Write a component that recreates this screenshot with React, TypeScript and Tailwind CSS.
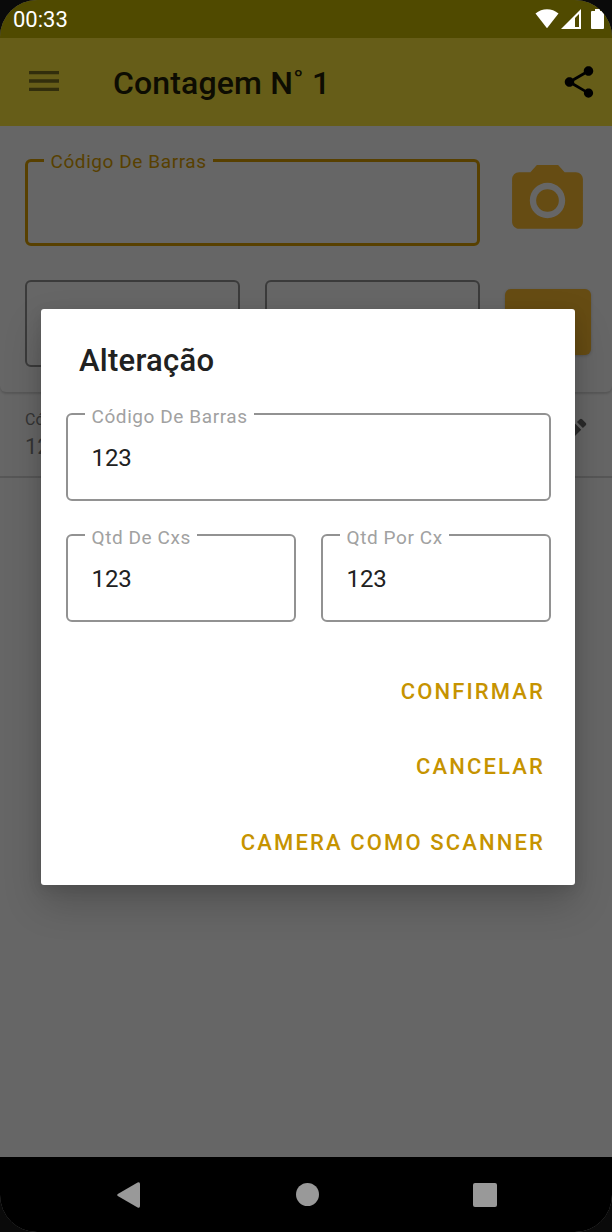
import type { ReactNode } from "react";
import { MdCameraAlt, MdEdit, MdMenu, MdShare } from "react-icons/md";

function OutlinedField({
  label,
  value,
  className = "",
}: {
  label: string;
  value: string;
  className?: string;
}) {
  return (
    <fieldset
      className={`h-[99px] min-w-0 rounded-[6px] border-2 border-[#929292] pl-[17px] ${className}`}
    >
      <legend className="h-6 pr-[6px] pl-[6.5px] text-[19px] leading-[29px] tracking-[0.58px] whitespace-nowrap text-[#a1a1a1]">
        {label}
      </legend>
      <div className="pt-[18px] pl-[6.5px] text-[24px] leading-7 tracking-[-0.1px] text-[#212121]">
        {value}
      </div>
    </fieldset>
  );
}

function DialogAction({ children }: { children: ReactNode }) {
  return (
    <button className="h-[75.5px] text-right text-[22px] leading-none font-medium tracking-[2.13px] whitespace-nowrap text-[#c69300]">
      {children}
    </button>
  );
}

function StatusBar() {
  return (
    <div className="flex h-[38px] shrink-0 items-start bg-[#504a00] pt-[9px] pr-2 pl-[13px] text-white">
      <span className="flex-1 text-[22px] leading-[22px]">00:33</span>
      <svg className="mr-[2px] h-[20px] w-[24px]" viewBox="0 0 24 20" fill="currentColor">
        <path d="M12 19.2 0.5 4.6C7-1.1 17-1.1 23.5 4.6Z" />
      </svg>
      <svg className="mr-[10px] h-[20px] w-[20px]" viewBox="0 0 20 20" fill="currentColor">
        <path fillRule="evenodd" d="M0 20 20 0V20ZM14 9V18H18V5Z" />
      </svg>
      <svg className="h-[20px] w-[13px]" viewBox="0 0 13 20" fill="currentColor">
        <path d="M4 0H9V2H12Q13 2 13 3V19Q13 20 12 20H1Q0 20 0 19V3Q0 2 1 2H4Z" />
      </svg>
    </div>
  );
}

function AppBar() {
  return (
    <header className="flex h-[88px] shrink-0 items-center bg-[#665d18] pr-[14.5px] pl-6 text-[#0d0c02]">
      <MdMenu className="relative -top-px h-10 w-10 text-[#322e0c]" />
      <h1 className="ml-[49px] flex-1 pt-[2px] text-[32px] leading-none font-medium tracking-[0.15px]">
        Contagem N˚ 1
      </h1>
      <MdShare className="relative -top-[0.5px] h-[38px] w-[38px] text-black" />
    </header>
  );
}

function CountForm() {
  return (
    <section className="h-[266px] shrink-0 rounded-b-[6px] bg-[#666666] pt-[22px] pl-[25px] shadow-[0_2px_2px_rgba(0,0,0,0.14)]">
      <div className="flex">
        <fieldset className="h-[98px] w-[455px] rounded-[6px] border-[3px] border-[#584000] pl-[16px]">
          <legend className="h-6 pr-[6px] pl-[6.5px] text-[19px] leading-[28px] tracking-[0.58px] whitespace-nowrap text-[#584000]">
            Código De Barras
          </legend>
        </fieldset>
        <MdCameraAlt className="mt-[10px] ml-[25px] h-[85px] w-[85px] text-[#664c13]" />
      </div>
      <div className="mt-[34px] flex">
        <div className="h-[87px] w-[215px] rounded-[6px] border-2 border-[#3b3b3b]" />
        <div className="ml-[25px] h-[87px] w-[215px] rounded-[6px] border-2 border-[#3b3b3b]" />
        <div className="mt-[9px] ml-[25px] h-[66px] w-[86px] rounded-[6px] bg-[#664c13] shadow-[0_1px_3px_rgba(0,0,0,0.2)]" />
      </div>
    </section>
  );
}

function CountRow() {
  return (
    <div className="mt-[2px] flex h-[84px] shrink-0 justify-between border-b-2 border-[#575757] pr-[21px] pl-[25px] text-[#343434]">
      <div className="pt-[16px]">
        <div className="text-[16px] leading-[20px]">Código De Barras</div>
        <div className="pt-[3px] text-[22px] leading-[28px]">123</div>
      </div>
      <MdEdit className="mt-5 h-[38px] w-[38px] text-[#2b2b2b]" />
    </div>
  );
}

function NavigationBar() {
  return (
    <nav className="flex h-[75px] shrink-0 items-center bg-black pl-[117px] text-[#999999]">
      <svg className="h-[26px] w-[23px]" viewBox="0 0 23 26" fill="currentColor">
        <path d="M.8 12 20.6.6Q23-.4 23 2V24Q23 26.4 20.6 25.4L.8 14Q-.4 13 .8 12Z" />
      </svg>
      <div className="mb-px ml-[156px] h-[23px] w-[23px] rounded-full bg-[#999999]" />
      <div className="ml-[154px] h-[24px] w-[24px] rounded-[2px] bg-[#999999]" />
    </nav>
  );
}

function EditDialog() {
  return (
    <div
      role="dialog"
      className="absolute top-[309px] left-[41px] flex h-[576px] w-[534px] flex-col rounded-[3px] bg-white pr-6 pl-[25px] shadow-[0_18px_38px_rgba(0,0,0,0.2),0_4px_14px_rgba(0,0,0,0.1)]"
    >
      <h2 className="pt-[36px] pl-[13px] text-[31px] leading-8 font-medium tracking-[0.25px] text-[#212121]">
        Alteração
      </h2>
      <OutlinedField label="Código De Barras" value="123" className="mt-[25px]" />
      <div className="mt-[22px] grid grid-cols-2 gap-[25px]">
        <OutlinedField label="Qtd De Cxs" value="123" />
        <OutlinedField label="Qtd Por Cx" value="123" />
      </div>
      <div className="mt-[32px] flex flex-col items-end pr-[6px]">
        <DialogAction>CONFIRMAR</DialogAction>
        <DialogAction>CANCELAR</DialogAction>
        <DialogAction>CAMERA COMO SCANNER</DialogAction>
      </div>
    </div>
  );
}

export default function App() {
  return (
    <div className="h-[1232px] w-[612px] bg-[#0a0a0a] font-[Roboto,sans-serif]">
      <div className="relative flex h-full w-full flex-col overflow-hidden rounded-[37px] bg-[#666666]">
        <StatusBar />
        <AppBar />
        <main className="flex flex-1 flex-col">
          <CountForm />
          <CountRow />
        </main>
        <NavigationBar />
        <EditDialog />
      </div>
    </div>
  );
}
